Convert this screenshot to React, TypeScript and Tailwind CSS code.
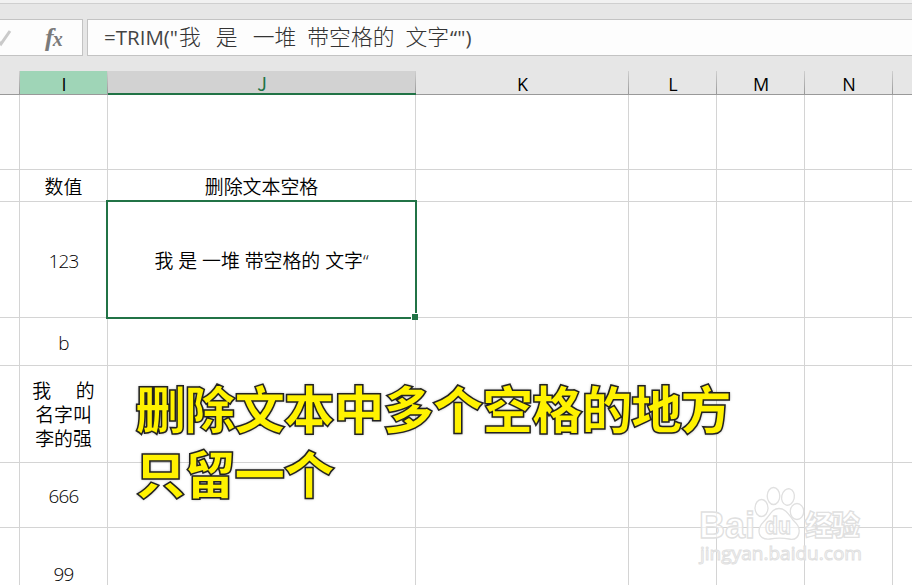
import clsx from "clsx";

interface Column {
	id: string;
	header: string;
	selected?: "match" | "active";
}

const columns: Column[] = [
	{ id: "h", header: "" },
	{ id: "i", header: "I", selected: "match" },
	{ id: "j", header: "J", selected: "active" },
	{ id: "k", header: "K" },
	{ id: "l", header: "L" },
	{ id: "m", header: "M" },
	{ id: "n", header: "N" },
	{ id: "o", header: "" },
];

const rows: Record<string, string>[] = [
	{},
	{ i: "数值", j: "删除文本空格" },
	{ i: "123", j: "我 是 一堆 带空格的 文字“" },
	{ i: "b" },
	{ i: "我     的\n名字叫\n李的强" },
	{ i: "666" },
	{ i: "99" },
];

const gridColumns = "grid grid-cols-[20px_88px_308px_213px_88px_88px_88px_19px]";

function FormulaBar() {
	return (
		<div className="flex h-[37px] gap-1">
			<div className="flex w-[83px] items-center border border-l-0 border-[#c3c3c3] bg-[#fdfdfd]">
				<svg width="12" height="18" viewBox="0 0 12 18" fill="none">
					<path d="M-2 12L1 15L10 2" stroke="#cacaca" strokeWidth="3" />
				</svg>
				<span className="ml-[33px] font-['Liberation_Serif',serif] text-[26px] leading-none font-bold text-[#7a7a7a] italic">
					f<span className="-ml-px text-[20px]">x</span>
				</span>
			</div>
			<div className="flex flex-1 items-center border border-r-0 border-[#c3c3c3] bg-[#fdfdfd] pl-4 font-['Open_Sans','Noto_Sans_CJK_SC',sans-serif] text-[20.5px] whitespace-pre text-[#444]">
				<span className="mr-px">=TRIM("</span>
				<span className="text-[21.8px] font-light text-[#333]">
					<span className="mr-[15px]">我</span>
					<span className="mr-[15px]">是</span>
					<span className="mr-[11px]">一堆</span>
					<span className="mr-[11px]">带空格的</span>
					<span>文字</span>
				</span>
				<span className="ml-px">“")</span>
			</div>
		</div>
	);
}

function ColumnHeaders() {
	return (
		<div className={clsx(gridColumns, "h-6")}>
			{columns.map((column) => (
				<div
					key={column.id}
					className={clsx(
						"relative flex items-end justify-center pb-px text-[18px] leading-[18px] font-[370]",
						!column.selected && "border-b border-[#999]",
						column.selected === "match" &&
							"border-b border-[#999] bg-[#9fd5b7]",
						column.selected === "active" &&
							"border-b-2 border-[#217346] bg-[#d2d2d2] font-['Noto_Sans_CJK_SC',sans-serif] text-[17px] text-[#217346]",
					)}
				>
					{column.header}
					{column.id !== "o" && (
						<span className="absolute top-0 right-0 bottom-0 w-px bg-linear-to-b from-[#cfcfcf] to-[#999]" />
					)}
				</div>
			))}
		</div>
	);
}

function Sheet() {
	return (
		<div
			className={clsx(
				gridColumns,
				"flex-1 grid-rows-[75px_32px_116px_48px_97px_65px_92px] overflow-hidden bg-white",
			)}
		>
			{rows.map((row, index) =>
				columns.map((column) => {
					const isLatin = /^\w+$/.test(row[column.id] ?? "");

					return (
						<div
							key={`${index}-${column.id}`}
							className={clsx(
								"relative flex items-center justify-center border-b border-[#d4d4d4] text-center text-[18.9px] leading-6 font-[350] whitespace-pre",
								column.id !== "o" && "border-r",
								index < 6 && "pt-0.5",
								isLatin && "tracking-[-0.8px]",
							)}
						>
							{row[column.id]}
							{index === 2 && column.id === "j" && (
								<span className="absolute -top-0.5 -right-0.5 -bottom-0.5 -left-0.5 z-10 border-2 border-[#217346]">
									<span className="absolute -right-[3px] -bottom-[3px] size-[7px] border-t border-l border-white bg-[#217346]" />
								</span>
							)}
						</div>
					);
				}),
			)}
		</div>
	);
}

function Caption() {
	return (
		<div className="absolute top-[375px] left-[135px] z-20 font-['Noto_Sans_CJK_SC',sans-serif] text-[51px] leading-[65px] font-black tracking-[-1.4px] whitespace-nowrap text-[#fff200] [-webkit-text-stroke:1.5px_#222] [text-shadow:0_0_3px_#0008]">
			<p>删除文本中多个空格的地方</p>
			<p>只留一个</p>
		</div>
	);
}

function Watermark() {
	return (
		<svg
			className="absolute top-[480px] left-[692px] z-20"
			width="180"
			height="90"
			viewBox="0 0 180 90"
			fill="#ffffffa0"
			stroke="#e0e0e0"
			strokeWidth="1.3"
			fontFamily="'Liberation Sans', 'Noto Sans CJK SC', sans-serif"
		>
			<text x="7" y="58" fontSize="36" fontWeight="700" textLength="56">
				Bai
			</text>
			<ellipse cx="69.5" cy="28" rx="6.5" ry="8.5" />
			<ellipse cx="81.5" cy="16" rx="6.3" ry="8.5" />
			<ellipse cx="96" cy="17" rx="6.3" ry="8.3" transform="rotate(12 96 17)" />
			<ellipse cx="105" cy="31.5" rx="6.7" ry="8" />
			<path d="M87 28.500C94 28.500 97 35 101 40C105 44 108 47 107 53C106 58 102 60 97 59C91 58 84 58 78 59C72 60 67 57 67 51C67 45 71 43 75 38C79 33 81 28.500 87 28.500Z" />
			<text x="73" y="54" fontSize="24" fontWeight="700" textLength="26" lengthAdjust="spacingAndGlyphs">
				du
			</text>
			<text x="113" y="56" fontSize="28" fontWeight="900" fontFamily="'Noto Sans CJK SC', sans-serif" textLength="55">
				经验
			</text>
			<text x="8" y="80" fontSize="19" strokeWidth="1" fontFamily="'Open Sans', sans-serif" textLength="162" lengthAdjust="spacingAndGlyphs">
				jingyan.baidu.com
			</text>
		</svg>
	);
}

export default function App() {
	return (
		<div className="relative flex h-[585px] w-[912px] flex-col overflow-hidden bg-[#e6e6e6] font-['Open_Sans','Noto_Sans_CJK_SC',sans-serif] text-black">
			<div className="mb-[15px] h-1 border-b border-[#cfcfcf] bg-[#f1f1f1]" />
			<FormulaBar />
			<div className="h-[15px]" />
			<ColumnHeaders />
			<Sheet />
			<Caption />
			<Watermark />
		</div>
	);
}
